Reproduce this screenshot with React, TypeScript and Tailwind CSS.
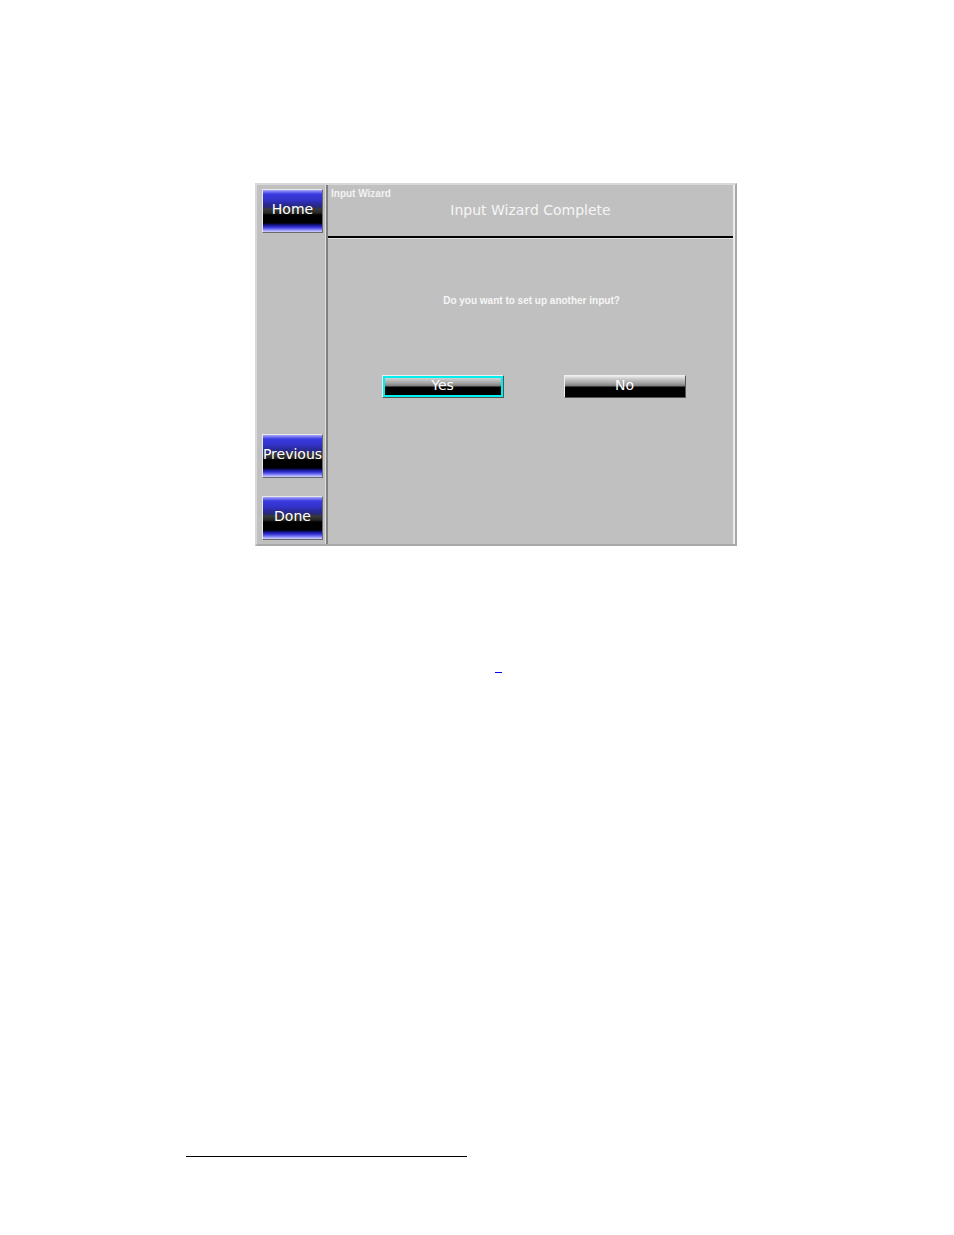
function NavButton({ label }: { label: string }) {
  return (
    <div className="w-[61px] h-[44px] border border-t-[#e8e8e8] border-l-[#e8e8e8] border-r-[#6a6a6a] border-b-[#6a6a6a] bg-[linear-gradient(to_bottom,#a8a8ff_0px,#7070f0_2px,#3a3ae0_4px,#3232c8_10px,#2a2a9a_14px,#28287a_17px,#3a3a3a_19px,#262626_23px,#000_25px,#000_33px,#14148a_35px,#3030d0_37px,#6a6af0_39px,#b8b8ff_41px,#d8d8ff_43px)] flex items-center justify-center">
      <span className="text-[14px] leading-none text-white whitespace-nowrap font-['DejaVu_Sans',sans-serif] -mt-[4px]">
        {label}
      </span>
    </div>
  );
}

function ChoiceButton({ label, focused }: { label: string; focused?: boolean }) {
  return (
    <div className="w-[122px] h-[23px] border border-t-[#f0f0f0] border-l-[#f0f0f0] border-r-[#555] border-b-[#555] bg-[linear-gradient(to_bottom,#ececec_0px,#c8c8c8_3px,#a4a4a4_7px,#7c7c7c_10px,#000_11px,#000_23px)]">
      <div
        className={
          focused
            ? "w-full h-full border-2 border-[#00f0f0] flex items-center justify-center"
            : "w-full h-full flex items-center justify-center"
        }
      >
        <span className="text-[14px] leading-none text-white font-['DejaVu_Sans',sans-serif] -mt-[4px]">
          {label}
        </span>
      </div>
    </div>
  );
}

export default function App() {
  return (
    <div className="min-h-[1235px] bg-white font-['Liberation_Sans',sans-serif]">
      <div className="pt-[183px] pl-[255px]">
        <div className="w-[482px] h-[363px] border-2 border-t-[#d8d8d8] border-l-[#d8d8d8] border-r-[#a8a8a8] border-b-[#a8a8a8] bg-[#c0c0c0] flex">
          {/* side bar */}
          <div className="w-[71px] h-full border-r-2 border-r-[#808080] shadow-[inset_-1px_0_0_#e0e0e0] flex flex-col pl-[5px] pt-[4px] pb-[4px]">
            <NavButton label="Home" />
            <div className="flex-1" />
            <NavButton label="Previous" />
            <div className="h-[18px]" />
            <NavButton label="Done" />
          </div>

          {/* main panel */}
          <div className="flex-1 flex flex-col border-r-2 border-r-[#ececec]">
            <div className="h-[53px] border-b-2 border-b-[#000] shadow-[0_1px_0_#e0e0e0]">
              <div className="pl-[3px] pt-[4px] text-[10px] leading-none font-bold text-[#f2f2f2]">
                Input Wizard
              </div>
              <div className="text-center mt-[4px] text-[14px] leading-none text-[#f6f6f6] font-['DejaVu_Sans',sans-serif]">
                Input Wizard Complete
              </div>
            </div>
            <div className="flex-1 flex flex-col items-center pt-[58px]">
              <div className="text-[10px] leading-none font-bold text-[#f6f6f6] pl-[2px]">
                Do you want to set up another input?
              </div>
              <div className="flex gap-[60px] mt-[69px] pl-[6px]">
                <ChoiceButton label="Yes" focused />
                <ChoiceButton label="No" />
              </div>
            </div>
          </div>
        </div>
      </div>

      <div className="pl-[495px] pt-[126px]">
        <div className="w-[7px] h-[1px] bg-[#0000ff]" />
      </div>

      <div className="pl-[186px] pt-[483px]">
        <div className="w-[281px] h-[1px] bg-black" />
      </div>
    </div>
  );
}
